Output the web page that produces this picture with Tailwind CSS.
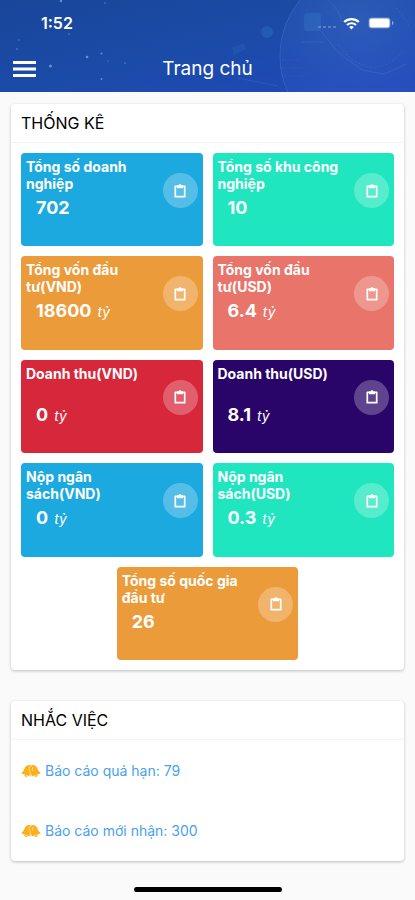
<!DOCTYPE html>
<html lang="vi">
<head>
<meta charset="utf-8">
<meta name="viewport" content="width=device-width, initial-scale=1">
<title>Trang chủ</title>
<script src="https://cdn.jsdelivr.net/npm/@tailwindcss/browser@4"></script>
</head>
<body class="flex min-h-screen flex-col bg-[#fafafa] font-['Inter','Liberation_Sans',sans-serif] text-black">

<svg class="hidden" aria-hidden="true">
  <symbol id="clipboard" viewBox="0 0 14 16">
    <path d="M2.300 3.300h9.400v10.400H2.300z" fill="none" stroke="currentColor" stroke-width="1.700" stroke-linejoin="round"/>
    <path d="M4 2.400h1.400a1.650 1.650 0 0 1 3.200 0H10v2.800H4z" fill="currentColor"/>
  </symbol>
  <symbol id="bells" viewBox="0 0 20 14">
    <g fill="#fbb01c">
      <path d="M9.600 1.200C6.500.5 4 2.400 3.300 5C2.900 6.800 1.900 7.600.9 8.400c-.6.500-.3 1.200.3 1.400l8 2.800L11 6z"/>
      <path d="M3.200 10.800l3.600 1.300c-.8 1.500-3.500.8-3.600-1.300z"/>
      <path d="M10.400 1.200c3.100-.7 5.600 1.200 6.300 3.800c.4 1.800 1.400 2.600 2.400 3.400c.6.500.3 1.200-.3 1.400l-8 2.800L9 6z"/>
      <path d="M16.800 10.800l-3.600 1.300c.8 1.500 3.500.8 3.600-1.300z"/>
    </g>
    <path d="M9.300 2C7.600 3.500 8.300 5.600 9 7.600c.6 1.800.3 3-.4 4.400M12.300 3.200c-1.100.9-1 2.300-.6 3.600" fill="none" stroke="#ffe6ae" stroke-width=".8"/>
  </symbol>
</svg>

<header class="relative flex h-[92px] flex-col overflow-hidden bg-linear-to-br from-[#19469a] via-[#1b4ba8] to-[#2148ba] text-white">
  <!-- Globe and star decoration -->
  <svg class="absolute inset-0 size-full" viewBox="0 0 415 92" preserveAspectRatio="xMidYMid slice" aria-hidden="true">
    <defs>
      <radialGradient id="globe" cx=".45" cy=".3" r=".6">
        <stop offset="0" stop-color="#4a7ad6" stop-opacity=".35"/>
        <stop offset="1" stop-color="#3c62cc" stop-opacity=".15"/>
      </radialGradient>
    </defs>
    <circle cx="368" cy="56" r="88" fill="url(#globe)" stroke="#6d93df" stroke-opacity=".25"/>
    <g fill="#3f9bd8" fill-opacity=".2">
      <rect x="304" y="13" width="17" height="18" rx="3"/>
      <circle cx="267" cy="32" r="6"/>
      <path d="M232 48l12-5 2 6-12 6z" fill-opacity=".12"/>
    </g>
    <g fill="none" stroke="#86aae8" stroke-opacity=".16">
      <path d="M302 42h22M328 0c8 7 12 14 14 22M238 78l40 8M320 30l18 22 24 18 22 4 22-10"/>
      <path d="M338 44c8 12 16 18 28 22s26-2 36-14M396 8c6 6 10 12 14 20" stroke-dasharray="2 2"/>
      <path d="M346 54c10 10 18 14 30 14M282 60h18M280 68h22M282 76h24" stroke-dasharray="1 2"/>
    </g>
    <g fill="#8fc0f6" fill-opacity=".6">
      <circle cx="61" cy="1" r="1.200"/><circle cx="105" cy="3" r=".7"/><circle cx="19" cy="40" r=".7"/>
      <circle cx="17" cy="49" r=".8"/><circle cx="50.500" cy="66" r="1.500"/><circle cx="87" cy="57" r="1.300"/>
      <circle cx="101.500" cy="53.500" r="1"/><circle cx="101.500" cy="79" r="1"/><circle cx="125" cy="63" r=".7"/>
      <circle cx="69" cy="34" r=".7"/><circle cx="108" cy="61" r=".6"/>
    </g>
  </svg>
  <div class="relative flex h-[46px] items-center justify-between pr-[21px] pl-[41px]">
    <time class="text-base font-semibold">1:52</time>
    <div class="flex items-center">
      <svg class="h-[14px] w-[22px]" viewBox="0 0 22 14" fill="#9fb7ea" fill-opacity=".4" aria-hidden="true">
        <rect x="1" y="10" width="3" height="2"/><rect x="6" y="10" width="3" height="2"/><rect x="11" y="10" width="3" height="2"/><rect x="16" y="10" width="3" height="2"/>
      </svg>
      <svg class="mr-2 ml-1 h-[13px] w-[17px]" viewBox="0 0 17 13" aria-label="Wi-Fi">
        <path d="M1.200 5a10.500 10.500 0 0 1 14.600 0M4 8a6.600 6.600 0 0 1 9 0" fill="none" stroke="#fff" stroke-width="2.200"/>
        <path d="M6.200 9.900a3.500 3.500 0 0 1 4.600 0L8.500 12.400z" fill="#fff"/>
      </svg>
      <svg class="h-[12px] w-[26px]" viewBox="0 0 26 12" aria-label="Pin">
        <rect x=".5" y=".5" width="22" height="11" rx="3" fill="#fff" fill-opacity=".3"/>
        <rect x="1.500" y="1.500" width="20" height="9" rx="2" fill="#fff"/>
        <path d="M24 4v4c2-.8 2-3.200 0-4z" fill="#fff" fill-opacity=".5"/>
      </svg>
    </div>
  </div>
  <div class="relative grid h-[46px] grid-cols-[48px_1fr_48px] items-center">
    <button type="button" aria-label="Menu" class="flex h-full items-center pl-[13px]">
      <svg class="h-[16px] w-[23px]" viewBox="0 0 23 16" fill="#fff" aria-hidden="true">
        <path d="M0 0h23v3H0zM0 6.500h23v3H0zM0 13h23v3H0z"/>
      </svg>
    </button>
    <h1 class="text-center text-[19px]">Trang chủ</h1>
  </div>
</header>

<main class="flex flex-col gap-[31px] px-[11px] pt-3">
  <section class="rounded-[4px] bg-white shadow-[0_1px_3px_rgba(0,0,0,0.25)]">
    <h2 class="border-b border-[#f3f3f3] px-[10px] py-2 text-base leading-[22px]">THỐNG KÊ</h2>
    <div class="grid min-h-[527px] auto-rows-fr grid-cols-4 gap-[10px] p-[10px]">

      <article class="col-span-2 flex justify-between rounded-[4px] bg-[#1ba9df] p-[5px] text-white">
        <div class="w-[130px]">
          <h3 class="min-h-[34px] text-sm leading-[17px] font-bold">Tổng số doanh nghiệp</h3>
          <p class="mt-1 pl-[10px] text-lg leading-6 font-bold">702</p>
        </div>
        <span class="mt-[15px] flex size-[35px] items-center justify-center rounded-full bg-white/25"><svg class="h-4 w-[14px]"><use href="#clipboard"/></svg></span>
      </article>

      <article class="col-span-2 flex justify-between rounded-[4px] bg-[#20e6bf] p-[5px] text-white">
        <div class="w-[130px]">
          <h3 class="min-h-[34px] text-sm leading-[17px] font-bold">Tổng số khu công nghiệp</h3>
          <p class="mt-1 pl-[10px] text-lg leading-6 font-bold">10</p>
        </div>
        <span class="mt-[15px] flex size-[35px] items-center justify-center rounded-full bg-white/25"><svg class="h-4 w-[14px]"><use href="#clipboard"/></svg></span>
      </article>

      <article class="col-span-2 flex justify-between rounded-[4px] bg-[#ec9b3b] p-[5px] text-white">
        <div class="w-[130px]">
          <h3 class="min-h-[34px] text-sm leading-[17px] font-bold">Tổng vốn đầu tư(VND)</h3>
          <p class="mt-1 flex items-baseline gap-[6px] pl-[10px] text-lg leading-6 font-bold">18600 <i class="text-sm font-normal">tỷ</i></p>
        </div>
        <span class="mt-[15px] flex size-[35px] items-center justify-center rounded-full bg-white/25"><svg class="h-4 w-[14px]"><use href="#clipboard"/></svg></span>
      </article>

      <article class="col-span-2 flex justify-between rounded-[4px] bg-[#e8746a] p-[5px] text-white">
        <div class="w-[130px]">
          <h3 class="min-h-[34px] text-sm leading-[17px] font-bold">Tổng vốn đầu tư(USD)</h3>
          <p class="mt-1 flex items-baseline gap-[6px] pl-[10px] text-lg leading-6 font-bold">6.4 <i class="text-sm font-normal">tỷ</i></p>
        </div>
        <span class="mt-[15px] flex size-[35px] items-center justify-center rounded-full bg-white/25"><svg class="h-4 w-[14px]"><use href="#clipboard"/></svg></span>
      </article>

      <article class="col-span-2 flex justify-between rounded-[4px] bg-[#d7283b] p-[5px] text-white">
        <div class="w-[130px]">
          <h3 class="min-h-[34px] text-sm leading-[17px] font-bold">Doanh thu(VND)</h3>
          <p class="mt-1 flex items-baseline gap-[6px] pl-[10px] text-lg leading-6 font-bold">0 <i class="text-sm font-normal">tỷ</i></p>
        </div>
        <span class="mt-[15px] flex size-[35px] items-center justify-center rounded-full bg-white/25"><svg class="h-4 w-[14px]"><use href="#clipboard"/></svg></span>
      </article>

      <article class="col-span-2 flex justify-between rounded-[4px] bg-[#2a0569] p-[5px] text-white">
        <div class="w-[130px]">
          <h3 class="min-h-[34px] text-sm leading-[17px] font-bold">Doanh thu(USD)</h3>
          <p class="mt-1 flex items-baseline gap-[6px] pl-[10px] text-lg leading-6 font-bold">8.1 <i class="text-sm font-normal">tỷ</i></p>
        </div>
        <span class="mt-[15px] flex size-[35px] items-center justify-center rounded-full bg-white/25"><svg class="h-4 w-[14px]"><use href="#clipboard"/></svg></span>
      </article>

      <article class="col-span-2 flex justify-between rounded-[4px] bg-[#1ba9df] p-[5px] text-white">
        <div class="w-[130px]">
          <h3 class="min-h-[34px] text-sm leading-[17px] font-bold">Nộp ngân sách(VND)</h3>
          <p class="mt-1 flex items-baseline gap-[6px] pl-[10px] text-lg leading-6 font-bold">0 <i class="text-sm font-normal">tỷ</i></p>
        </div>
        <span class="mt-[15px] flex size-[35px] items-center justify-center rounded-full bg-white/25"><svg class="h-4 w-[14px]"><use href="#clipboard"/></svg></span>
      </article>

      <article class="col-span-2 flex justify-between rounded-[4px] bg-[#20e6bf] p-[5px] text-white">
        <div class="w-[130px]">
          <h3 class="min-h-[34px] text-sm leading-[17px] font-bold">Nộp ngân sách(USD)</h3>
          <p class="mt-1 flex items-baseline gap-[6px] pl-[10px] text-lg leading-6 font-bold">0.3 <i class="text-sm font-normal">tỷ</i></p>
        </div>
        <span class="mt-[15px] flex size-[35px] items-center justify-center rounded-full bg-white/25"><svg class="h-4 w-[14px]"><use href="#clipboard"/></svg></span>
      </article>

      <article class="col-span-2 col-start-2 flex justify-between rounded-[4px] bg-[#ec9b3b] p-[5px] text-white">
        <div class="w-[130px]">
          <h3 class="min-h-[34px] text-sm leading-[17px] font-bold">Tổng số quốc gia đầu tư</h3>
          <p class="mt-1 pl-[10px] text-lg leading-6 font-bold">26</p>
        </div>
        <span class="mt-[15px] flex size-[35px] items-center justify-center rounded-full bg-white/25"><svg class="h-4 w-[14px]"><use href="#clipboard"/></svg></span>
      </article>
    </div>
  </section>

  <section class="rounded-[4px] bg-white shadow-[0_1px_3px_rgba(0,0,0,0.25)]">
    <h2 class="border-b border-[#f3f3f3] px-[10px] py-2 text-base leading-[22px]">NHẮC VIỆC</h2>
    <ul class="pt-px text-sm leading-5 text-[#4a9ff0]">
      <li><a href="#qua-han" class="flex items-center gap-1 px-[10px] py-5"><svg class="h-[14px] w-5"><use href="#bells"/></svg>Báo cáo quá hạn: 79</a></li>
      <li><a href="#moi-nhan" class="flex items-center gap-1 px-[10px] py-5"><svg class="h-[14px] w-5"><use href="#bells"/></svg>Báo cáo mới nhận: 300</a></li>
    </ul>
  </section>
</main>

<footer class="mt-auto flex justify-center pb-2">
  <div class="h-[5px] w-[148px] rounded-full bg-black"></div>
</footer>
</body>
</html>
